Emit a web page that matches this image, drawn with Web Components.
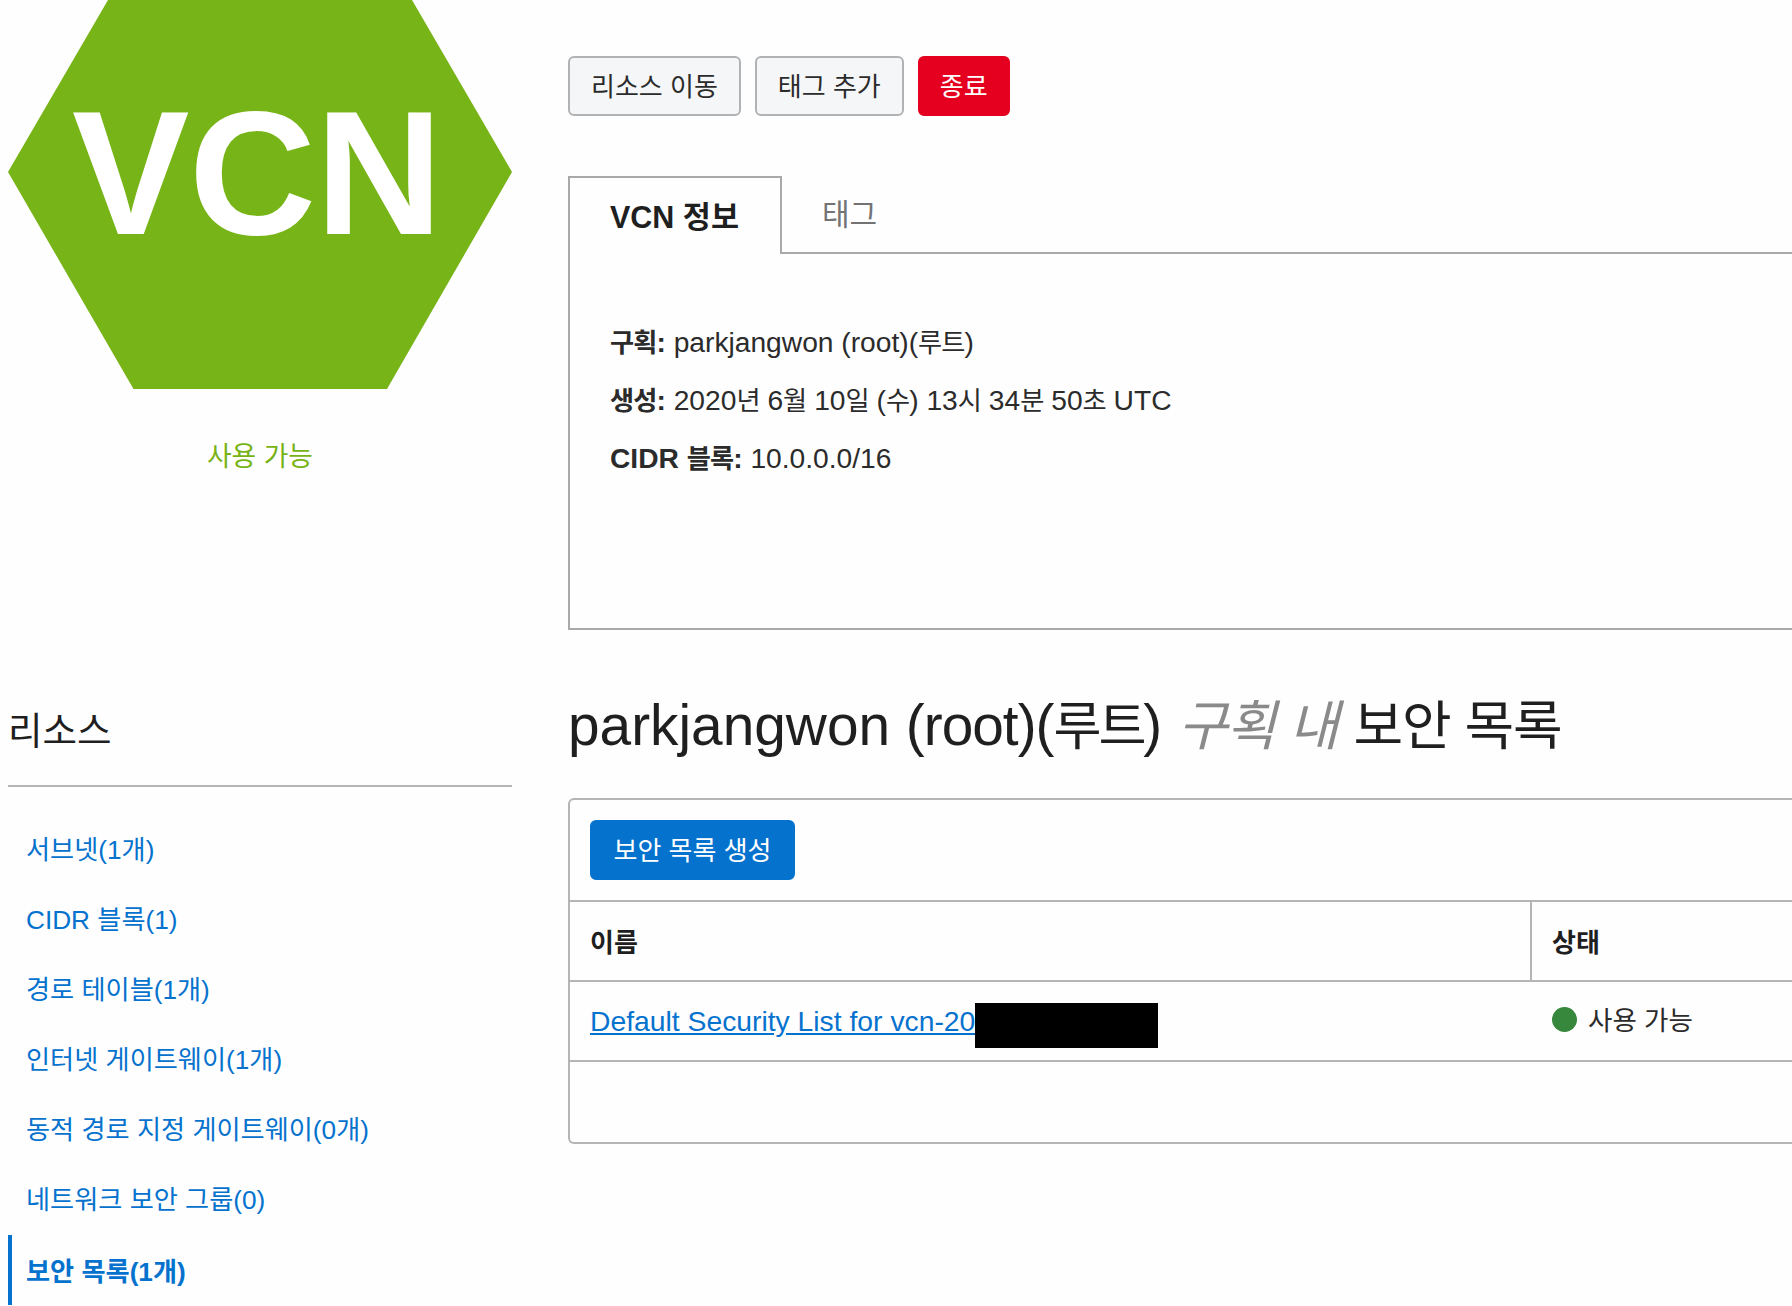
<!DOCTYPE html>
<html lang="ko">
<head>
<meta charset="utf-8">
<title>VCN</title>
<style>
  html, body { margin: 0; padding: 0; background: #fefefe; overflow: hidden; height: 100%; }
  body { font-family: "Liberation Sans", "Noto Sans CJK KR", sans-serif; color: #1f1f1f; font-size: 28px; }
</style>
</head>
<body>
<vcn-page>
  <vcn-badge slot="badge" status="사용 가능">VCN</vcn-badge>
  <vcn-actions slot="actions">
    <action-button>리소스 이동</action-button>
    <action-button>태그 추가</action-button>
    <action-button kind="danger">종료</action-button>
  </vcn-actions>
  <vcn-tabs slot="tabs" active="VCN 정보" other="태그">
    <info-row><span slot="label"><k-o>구획</k-o>:</span>parkjangwon (root)(<k-o>루트</k-o>)</info-row>
    <info-row><span slot="label"><k-o>생성</k-o>:</span>2020<k-o>년</k-o> 6<k-o>월</k-o> 10<k-o>일</k-o> (<k-o>수</k-o>) 13<k-o>시</k-o> 34<k-o>분</k-o> 50<k-o>초</k-o> UTC</info-row>
    <info-row><span slot="label">CIDR <k-o>블록</k-o>:</span>10.0.0.0/16</info-row>
  </vcn-tabs>
  <resource-menu slot="menu" title="리소스">
    <menu-item>서브넷(1개)</menu-item>
    <menu-item>CIDR 블록(1)</menu-item>
    <menu-item>경로 테이블(1개)</menu-item>
    <menu-item>인터넷 게이트웨이(1개)</menu-item>
    <menu-item>동적 경로 지정 게이트웨이(0개)</menu-item>
    <menu-item>네트워크 보안 그룹(0)</menu-item>
    <menu-item active>보안 목록(1개)</menu-item>
  </resource-menu>
  <list-section slot="list"></list-section>
</vcn-page>

<script>
// hangul runs are drawn a bit smaller and tighter than the latin around them
// no whitespace in this template, it would show up as a gap before the text
const koTpl = document.createElement('template')
koTpl.innerHTML = `<style>:host { font-size: .93em; letter-spacing: -.035em; }</style><slot></slot>`
class KoRun extends HTMLElement {
  constructor () {
    super()
    this.attachShadow({ mode: 'open' }).appendChild(koTpl.content.cloneNode(true))
  }
}
customElements.define('k-o', KoRun)

const pageTpl = document.createElement('template')
pageTpl.innerHTML = `
<style>
  :host { display: block; width: 1792px; height: 1306px; overflow: hidden; padding-left: 8px; box-sizing: border-box; }
  .row { display: grid; grid-template-columns: 504px 1240px; column-gap: 56px; }
  .top { height: 686px; }
  .right { display: flex; flex-direction: column; }
</style>
<div class="row top">
  <div><slot name="badge"></slot></div>
  <div class="right"><slot name="actions"></slot><slot name="tabs"></slot></div>
</div>
<div class="row">
  <div><slot name="menu"></slot></div>
  <div><slot name="list"></slot></div>
</div>`
class VcnPage extends HTMLElement {
  constructor () {
    super()
    this.attachShadow({ mode: 'open' }).appendChild(pageTpl.content.cloneNode(true))
  }
}
customElements.define('vcn-page', VcnPage)

const badgeTpl = document.createElement('template')
badgeTpl.innerHTML = `
<style>
  :host { display: block; width: 504px; }
  .hex { position: relative; height: 389px; }
  svg { display: block; }
  .label {
    position: absolute; left: 64px; top: 68px;
    font: bold 176px/1.2 "Liberation Sans", sans-serif; color: #fff; letter-spacing: -.5px;
  }
  .status { margin-top: 52px; text-align: center; color: #78b316; font-size: 26.8px; line-height: 32px; }
</style>
<div class="hex">
  <svg width="504" height="389" viewBox="0 0 504 389"><polygon points="100,0 404,0 504,172 379,389 125.5,389 0,172" fill="#76b417"/></svg>
  <div class="label"><slot></slot></div>
</div>
<div class="status"></div>`
class VcnBadge extends HTMLElement {
  constructor () {
    super()
    this.attachShadow({ mode: 'open' }).appendChild(badgeTpl.content.cloneNode(true))
  }
  connectedCallback () {
    this.shadowRoot.querySelector('.status').textContent = this.getAttribute('status')
  }
}
customElements.define('vcn-badge', VcnBadge)

const actionsTpl = document.createElement('template')
actionsTpl.innerHTML = `
<style>
  :host { display: flex; gap: 14px; padding-top: 56px; }
</style>
<slot></slot>`
class VcnActions extends HTMLElement {
  constructor () {
    super()
    this.attachShadow({ mode: 'open' }).appendChild(actionsTpl.content.cloneNode(true))
  }
}
customElements.define('vcn-actions', VcnActions)

const buttonTpl = document.createElement('template')
buttonTpl.innerHTML = `
<style>
  :host {
    display: inline-flex; align-items: center; height: 60px; box-sizing: border-box;
    padding: 0 21px 4px; font-size: 26px; color: #2b2b2b; background: #f5f6f7;
    border: 2px solid #b0b2b3; border-radius: 6px;
  }
  :host([kind="danger"]) { background: #e4001e; border-color: #e4001e; color: #fff; padding: 0 20px 4px; }
  :host([kind="primary"]) { background: #0572ce; border-color: #0572ce; color: #fff; padding: 0 21.5px 4px; }
</style>
<slot></slot>`
class ActionButton extends HTMLElement {
  constructor () {
    super()
    this.attachShadow({ mode: 'open' }).appendChild(buttonTpl.content.cloneNode(true))
  }
}
customElements.define('action-button', ActionButton)

const tabsTpl = document.createElement('template')
tabsTpl.innerHTML = `
<style>
  :host { display: block; margin-top: 60px; }
  .bar { display: flex; height: 78px; }
  .tab {
    width: 214px; box-sizing: border-box; border: 2px solid #a9a9a9; border-bottom: 0;
    padding: 15px 0 0 40px; font-weight: bold; font-size: 30.5px; line-height: 48px; color: #1f1f1f;
  }
  .rest { flex: 1; border-bottom: 2px solid #a9a9a9; padding: 15px 0 0 40px; font-size: 30px; line-height: 48px; color: #737373; }
  .body {
    height: 376px; box-sizing: border-box; padding: 59px 0 0 40px;
    border-left: 2px solid #a9a9a9; border-bottom: 2px solid #a9a9a9;
  }
</style>
<div class="bar"><div class="tab"></div><div class="rest"></div></div>
<div class="body"><slot></slot></div>`
class VcnTabs extends HTMLElement {
  constructor () {
    super()
    this.attachShadow({ mode: 'open' }).appendChild(tabsTpl.content.cloneNode(true))
  }
  connectedCallback () {
    this.shadowRoot.querySelector('.tab').textContent = this.getAttribute('active')
    this.shadowRoot.querySelector('.rest').textContent = this.getAttribute('other')
  }
}
customElements.define('vcn-tabs', VcnTabs)

const infoTpl = document.createElement('template')
infoTpl.innerHTML = `
<style>
  :host { display: block; height: 58px; line-height: 58px; font-size: 28.2px; color: #2b2b2b; white-space: nowrap; }
  b { font-weight: bold; }
</style>
<b><slot name="label"></slot></b> <slot></slot>`
class InfoRow extends HTMLElement {
  constructor () {
    super()
    this.attachShadow({ mode: 'open' }).appendChild(infoTpl.content.cloneNode(true))
  }
}
customElements.define('info-row', InfoRow)

const menuTpl = document.createElement('template')
menuTpl.innerHTML = `
<style>
  :host { display: block; }
  h2 {
    margin: 0; height: 101px; line-height: 54px; padding-top: 18px; box-sizing: border-box;
    font-size: 37.5px; font-weight: normal; color: #1f1f1f; border-bottom: 2px solid #b5b5b5;
  }
  .items { padding-top: 28px; }
</style>
<h2></h2>
<div class="items"><slot></slot></div>`
class ResourceMenu extends HTMLElement {
  constructor () {
    super()
    this.attachShadow({ mode: 'open' }).appendChild(menuTpl.content.cloneNode(true))
  }
  connectedCallback () {
    this.shadowRoot.querySelector('h2').textContent = this.getAttribute('title')
  }
}
customElements.define('resource-menu', ResourceMenu)

const itemTpl = document.createElement('template')
itemTpl.innerHTML = `
<style>
  :host {
    display: block; height: 70px; line-height: 70px; padding-left: 18px; box-sizing: border-box;
    font-size: 26.2px; color: #0572ce; white-space: nowrap;
  }
  :host([active]) { font-weight: bold; border-left: 4px solid #0572ce; padding: 2px 0 0 14px; }
</style>
<slot></slot>`
class MenuItem extends HTMLElement {
  constructor () {
    super()
    this.attachShadow({ mode: 'open' }).appendChild(itemTpl.content.cloneNode(true))
  }
}
customElements.define('menu-item', MenuItem)

const listTpl = document.createElement('template')
listTpl.innerHTML = `
<style>
  :host { display: block; }
  h1 { margin: 0; height: 112px; line-height: 80px; font-size: 56.8px; font-weight: normal; color: #1f1f1f; white-space: nowrap; }
  h1 k-o { font-size: .95em; letter-spacing: -.02em; }
  h1 .paren { letter-spacing: -1px; }
  h1 .own { font-size: .92em; letter-spacing: -.06em; }
  em { color: #8a8a8a; }
  .box { height: 346px; box-sizing: border-box; border: 2px solid #b5b5b5; border-right: 0; border-radius: 6px 0 0 6px; }
  .tools { height: 102px; box-sizing: border-box; padding: 20px 0 0 20px; border-bottom: 2px solid #b5b5b5; }
  .cols { display: grid; grid-template-columns: 960px 1fr; height: 80px; border-bottom: 2px solid #b5b5b5; box-sizing: border-box; font-weight: bold; font-size: 26px; align-items: stretch; }
  .cols div { display: flex; align-items: center; padding: 0 0 2px 20px; }
  .cols div + div { border-left: 2px solid #b5b5b5; }
  .data { display: grid; grid-template-columns: 960px 1fr; height: 80px; border-bottom: 2px solid #b5b5b5; box-sizing: border-box; font-size: 26.5px; }
  .data > div { display: flex; align-items: center; padding-left: 20px; }
  .data > div + div { padding-left: 22px; color: #2b2b2b; }
  a { color: #0572ce; text-decoration: underline; white-space: nowrap; font-size: 28.3px; margin-top: 1px; }
  .mask { width: 183px; height: 45px; background: #000; margin-top: 9px; }
  .dot { width: 25px; height: 25px; border-radius: 50%; background: #37873d; margin-right: 11px; margin-top: -3px; }
  .state { margin-top: -5px; }
</style>
<h1>parkjangwon <span class="paren">(root)(</span><k-o class="own">루트</k-o>) <em><k-o>구획 내</k-o></em> <k-o>보안 목록</k-o></h1>
<div class="box">
  <div class="tools"><action-button kind="primary">보안 목록 생성</action-button></div>
  <div class="cols"><div>이름</div><div>상태</div></div>
  <div class="data">
    <div><a href="#">Default Security List for vcn-20</a><span class="mask"></span></div>
    <div><span class="dot"></span><span class="state">사용 가능</span></div>
  </div>
</div>`
class ListSection extends HTMLElement {
  constructor () {
    super()
    this.attachShadow({ mode: 'open' }).appendChild(listTpl.content.cloneNode(true))
  }
}
customElements.define('list-section', ListSection)
</script>
</body>
</html>
